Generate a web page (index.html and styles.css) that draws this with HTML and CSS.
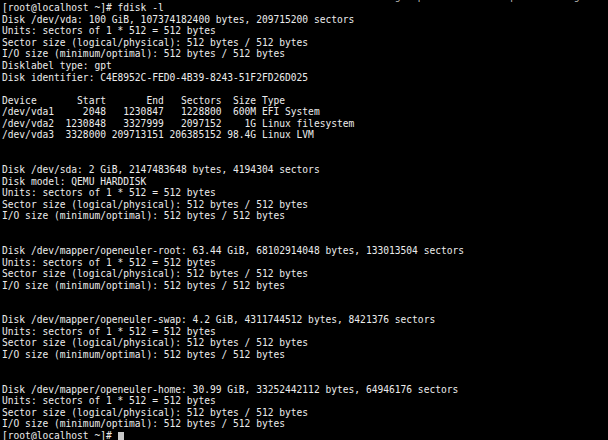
FILE: index.html
```html
<!DOCTYPE html>
<html>
<head>
<meta charset="utf-8">
<link rel="stylesheet" href="styles.css">
</head>
<body>
<pre class="term"><span class="prev">                                         Free Server Create-Disk-Image.rpm      no multipath warning</span>
[root@localhost ~]# fdisk -l
Disk /dev/vda: 100 GiB, 107374182400 bytes, 209715200 sectors
Units: sectors of 1 * 512 = 512 bytes
Sector size (logical/physical): 512 bytes / 512 bytes
I/O size (minimum/optimal): 512 bytes / 512 bytes
Disklabel type: gpt
Disk identifier: C4E8952C-FED0-4B39-8243-51F2FD26D025

Device       Start       End   Sectors  Size Type
/dev/vda1     2048   1230847   1228800  600M EFI System
/dev/vda2  1230848   3327999   2097152    1G Linux filesystem
/dev/vda3  3328000 209713151 206385152 98.4G Linux LVM


Disk /dev/sda: 2 GiB, 2147483648 bytes, 4194304 sectors
Disk model: QEMU HARDDISK
Units: sectors of 1 * 512 = 512 bytes
Sector size (logical/physical): 512 bytes / 512 bytes
I/O size (minimum/optimal): 512 bytes / 512 bytes


Disk /dev/mapper/openeuler-root: 63.44 GiB, 68102914048 bytes, 133013504 sectors
Units: sectors of 1 * 512 = 512 bytes
Sector size (logical/physical): 512 bytes / 512 bytes
I/O size (minimum/optimal): 512 bytes / 512 bytes


Disk /dev/mapper/openeuler-swap: 4.2 GiB, 4311744512 bytes, 8421376 sectors
Units: sectors of 1 * 512 = 512 bytes
Sector size (logical/physical): 512 bytes / 512 bytes
I/O size (minimum/optimal): 512 bytes / 512 bytes


Disk /dev/mapper/openeuler-home: 30.99 GiB, 33252442112 bytes, 64946176 sectors
Units: sectors of 1 * 512 = 512 bytes
Sector size (logical/physical): 512 bytes / 512 bytes
I/O size (minimum/optimal): 512 bytes / 512 bytes
[root@localhost ~]# <span class="cursor"> </span></pre>
</body>
</html>
```
FILE: styles.css
```css
html, body {
  margin: 0;
  padding: 0;
  background: #000;
  overflow: hidden;
  height: 440px;
}
.term {
  margin: -9.4px 0 0 0;
  padding: 0 2px;
  font-family: "DejaVu Sans Mono", monospace;
  font-size: 9.6px;
  line-height: 11.57px;
  color: #ececec;
  white-space: pre;
}
.prev {
  color: #bdbdbd;
}
.cursor {
  display: inline-block;
  width: 6px;
  height: 11px;
  background: #c8c8c8;
  vertical-align: -2px;
}
```
